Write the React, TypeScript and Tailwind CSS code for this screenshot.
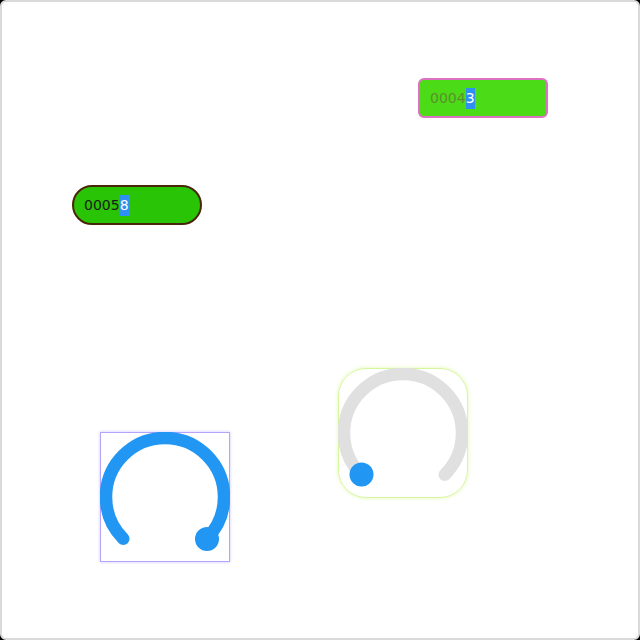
const Field = ({ value, last, box, text }: { value: string; last: string; box: string; text: string }) => (
  <div className={`flex h-[40px] w-[130px] items-center border-2 pl-[10px] text-[14px] ${box}`}>
    <span className={text}>{value}</span>
    <span className="bg-[#2f8ff5] text-white">{last}</span>
  </div>
);

const Knob = ({ frame, track, filled }: { frame: string; track: string; filled: boolean }) => (
  <div className={`h-[130px] w-[130px] shrink-0 ${frame}`}>
    <svg width="130" height="130" viewBox="0 0 130 130" className="-m-px">
      <path
        d="M 23.28 106.72 A 59 59 0 1 1 106.72 106.72"
        fill="none"
        stroke={track}
        strokeWidth="12.5"
        strokeLinecap="round"
      />
      {filled ? (
        <circle cx="107" cy="107" r="12" fill="#2196f3" />
      ) : (
        <circle cx="23.5" cy="106.5" r="12" fill="#2196f3" />
      )}
    </svg>
  </div>
);

export default function App() {
  return (
    <div className="h-[640px] w-[640px] bg-black" style={{ fontFamily: '"DejaVu Sans", Verdana, sans-serif' }}>
      <div className="flex h-[640px] w-[640px] flex-col rounded-md border-2 border-[#dadada] bg-white">
        <div className="ml-[416px] mt-[76px]">
          <Field
            value="0004"
            last="3"
            box="rounded-md border-[#dc72c4] bg-[#4cdb17]"
            text="text-[#5c8f2c]"
          />
        </div>
        <div className="ml-[70px] mt-[67px]">
          <Field
            value="0005"
            last="8"
            box="rounded-full border-[#4a2608] bg-[#29c406]"
            text="text-[#1b1b1b]"
          />
        </div>
        <div className="ml-[98px] mt-[143px] flex items-start gap-[108px]">
          <div className="mt-[64px]">
            <Knob frame="border border-[#b4a4fb] shadow-[0_0_3px_#cfc4ff]" track="#2196f3" filled />
          </div>
          <Knob frame="rounded-[28px] border border-[#d8f5a0] shadow-[0_0_4px_#dff9ae]" track="#e0e0e0" filled={false} />
        </div>
      </div>
    </div>
  );
}
